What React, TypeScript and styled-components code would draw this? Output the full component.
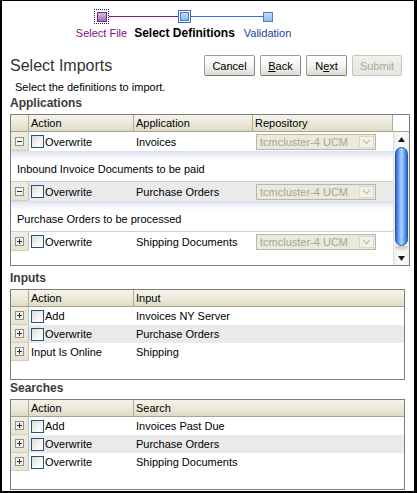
import React from "react";
import styled, { createGlobalStyle } from "styled-components";

const GlobalStyle = createGlobalStyle`
  html, body {
    margin: 0;
    padding: 0;
    background: #fff;
  }
  body {
    font-family: "Liberation Sans", Arial, sans-serif;
    font-size: 11px;
    color: #000;
  }
`;

const Frame = styled.div`
  box-sizing: border-box;
  width: 417px;
  height: 493px;
  border-style: solid;
  border-color: #000;
  border-width: 1px 3px 2px 2px;
  padding: 0 12px 0 8px;
`;

/* ---------- train ---------- */

const Train = styled.div`
  display: flex;
  margin: 8px 0 0 50px;
`;

const Step = styled.div`
  width: 83px;
  display: flex;
  flex-direction: column;
`;

const MarkerRow = styled.div`
  height: 15px;
  display: flex;
  align-items: center;
`;

const Line = styled.div<{ $color?: string }>`
  flex: 1;
  height: 1px;
  background: ${(p) => p.$color || "transparent"};
`;

const FocusRing = styled.div`
  box-sizing: border-box;
  width: 15px;
  height: 15px;
  border: 1px dotted #1a1a8c;
  display: flex;
  align-items: center;
  justify-content: center;
`;

const VisitedBox = styled.div`
  box-sizing: border-box;
  width: 10px;
  height: 10px;
  border: 1px solid #6e2f7e;
  background: linear-gradient(#d9b9e0, #a86fb6);
`;

const CurrentRing = styled.div`
  box-sizing: border-box;
  width: 13px;
  height: 13px;
  border: 1px solid #3568d0;
  padding: 1px;
  display: flex;
`;

const CurrentBox = styled.div`
  flex: 1;
  box-sizing: border-box;
  border: 1px solid #4677cc;
  background: linear-gradient(#c6dcf7, #8fb6ea);
`;

const NextBox = styled.div`
  box-sizing: border-box;
  width: 10px;
  height: 10px;
  border: 1px solid #4a7cd6;
  background: linear-gradient(#c9ddf8, #93b8ee);
`;

const StepLabel = styled.div<{ $kind: "visited" | "current" | "next" }>`
  margin-top: 3px;
  height: 13px;
  line-height: 13px;
  display: flex;
  justify-content: center;
  white-space: nowrap;
  font-size: ${(p) => (p.$kind === "current" ? "12px" : "11px")};
  font-weight: ${(p) => (p.$kind === "current" ? "bold" : "normal")};
  color: ${(p) =>
    p.$kind === "visited" ? "#7d0f82" : p.$kind === "next" ? "#1c3f9e" : "#000"};
`;

/* ---------- title / buttons ---------- */

const TitleRow = styled.div`
  margin-top: 15px;
  height: 21px;
  display: flex;
  align-items: center;
  justify-content: space-between;
`;

const Title = styled.h1`
  margin: 0;
  font-size: 16px;
  font-weight: normal;
  color: #333;
`;

const Buttons = styled.div`
  display: flex;
  gap: 5px;
`;

const Button = styled.button<{ $width: number }>`
  box-sizing: border-box;
  width: ${(p) => p.$width}px;
  height: 21px;
  padding: 0;
  font-family: "Liberation Sans", Arial, sans-serif;
  font-size: 11px;
  color: #000;
  border: 1px solid #9d9d9d;
  border-bottom-color: #767676;
  border-right-color: #858585;
  border-radius: 2px;
  background: linear-gradient(#ffffff, #f3f3ee 55%, #dcdcd3);

  &:disabled {
    color: #aaa89c;
    border-color: #c8c6bb;
    background: linear-gradient(#f1f0ec, #e6e5de);
  }

  u {
    text-decoration: underline;
  }
`;

const Instruction = styled.div`
  margin: 5px 0 0 5px;
  line-height: 13px;
  font-size: 11px;
`;

const SectionTitle = styled.div<{ $gap: number }>`
  margin-top: ${(p) => p.$gap}px;
  height: 14px;
  line-height: 14px;
  font-size: 12px;
  font-weight: bold;
  color: #3a3a3a;
`;

/* ---------- tables ---------- */

const Table = styled.div<{ $width: number }>`
  box-sizing: border-box;
  width: ${(p) => p.$width}px;
  margin-top: 4px;
  border: 1px solid #7c7c7c;
  background: #fff;
`;

const HeadRow = styled.div<{ $cols: string }>`
  display: grid;
  grid-template-columns: ${(p) => p.$cols};
  box-sizing: border-box;
  height: 17px;
  border-bottom: 1px solid #a8a38c;
  background: linear-gradient(#f5f3e9, #ebe8d9 60%, #dedac6);
`;

const HeadCell = styled.div<{ $blank?: boolean }>`
  box-sizing: border-box;
  display: flex;
  align-items: center;
  padding-left: 2px;
  border-right: 1px solid #b1ac96;
  background: ${(p) => (p.$blank ? "#fff" : "transparent")};
  white-space: nowrap;

  &:last-child {
    border-right: none;
  }
`;

const Body = styled.div<{ $height: number }>`
  height: ${(p) => p.$height}px;
  display: flex;
  overflow: hidden;
`;

const Rows = styled.div`
  flex: 1;
  display: flex;
  flex-direction: column;
`;

const Row = styled.div<{ $cols: string; $height: number; $shade?: boolean; $divider?: boolean }>`
  display: grid;
  grid-template-columns: ${(p) => p.$cols};
  box-sizing: border-box;
  height: ${(p) => p.$height}px;
  background: ${(p) => (p.$shade ? "#eaeaea" : "#fff")};
  border-top: ${(p) => (p.$divider ? "1px solid #cfcfcf" : "none")};
`;

const IconCell = styled.div`
  box-sizing: border-box;
  display: flex;
  align-items: center;
  justify-content: center;
  background: linear-gradient(#f0eee2, #e6e3d2);
  border-right: 1px solid #c6c2ad;
  border-bottom: 1px solid #d2cebc;
`;

const Cell = styled.div`
  display: flex;
  align-items: center;
  padding-left: 2px;
  white-space: nowrap;
  overflow: hidden;
`;

const DetailRow = styled.div`
  box-sizing: border-box;
  height: 30px;
  display: flex;
  align-items: flex-end;
  padding: 0 0 5px 6px;
  line-height: 13px;
  background: linear-gradient(#d6deea 0, #e9eef5 3px, #f8f9fb 7px, #fff 10px);
  white-space: nowrap;
`;

const Check = styled.span`
  box-sizing: border-box;
  width: 13px;
  height: 13px;
  margin-right: 1px;
  border: 1px solid #1f5484;
  background: linear-gradient(135deg, #dcdcd5, #f6f6f3 60%, #fff);
  flex: none;
`;

const Select = styled.div`
  box-sizing: border-box;
  width: 120px;
  height: 16px;
  margin-left: 1px;
  padding-left: 3px;
  display: flex;
  align-items: center;
  justify-content: space-between;
  border: 1px solid #b9b7a8;
  background: #ebe9da;
  color: #a6a59b;
`;

const SelectArrow = styled.div`
  box-sizing: border-box;
  width: 15px;
  height: 12px;
  margin-right: 1px;
  display: flex;
  align-items: center;
  justify-content: center;
  border: 1px solid #dcdace;
  background: #f3f2ea;
`;

/* ---------- scrollbar ---------- */

const Scrollbar = styled.div`
  box-sizing: border-box;
  width: 16px;
  display: flex;
  flex-direction: column;
  align-items: center;
  border-left: 1px solid #dedede;
  background: linear-gradient(90deg, #f1f1ec, #fbfbf9 50%, #f1f1ec);
`;

const ArrowSlot = styled.div<{ $height: number }>`
  height: ${(p) => p.$height}px;
  display: flex;
  align-items: center;
  justify-content: center;
`;

const Thumb = styled.div`
  box-sizing: border-box;
  width: 13px;
  height: 99px;
  border: 1px solid #2556b4;
  border-radius: 7px;
  background: linear-gradient(90deg, #2b61d0, #6fa3f1 25%, #acd0fb 50%, #6fa3f1 75%, #2b61d0);
`;

const ThumbShadow = styled.div`
  width: 13px;
  height: 5px;
  border-radius: 0 0 7px 7px;
  background: linear-gradient(#c9c9c4, #ecece8);
`;

const Spacer = styled.div`
  flex: 1;
`;

/* ---------- icons ---------- */

const Disclosure: React.FC<{ open?: boolean }> = ({ open }) => (
  <svg width="9" height="9" viewBox="0 0 9 9">
    <rect x="0.5" y="0.5" width="8" height="8" fill="#f5f4ee" stroke="#8f8f8f" />
    <path d="M2 4.5h5" stroke="#2e2e2e" />
    {!open && <path d="M4.5 2v5" stroke="#2e2e2e" />}
  </svg>
);

const Chevron = () => (
  <svg width="9" height="6" viewBox="0 0 9 6">
    <path d="M1 1l3.5 3.5L8 1" fill="none" stroke="#c4c3b8" strokeWidth="1.4" />
  </svg>
);

const Triangle: React.FC<{ down?: boolean }> = ({ down }) => (
  <svg width="7" height="5" viewBox="0 0 7 5">
    <path d={down ? "M0 0h7L3.5 5z" : "M0 5h7L3.5 0z"} fill="#1a1a1a" />
  </svg>
);

/* ---------- data ---------- */

const APP_COLS = "18px 105px 119px 140px";
const LIST_COLS = "18px 105px 1fr";

const applications = [
  { open: true, app: "Invoices", detail: "Inbound Invoice Documents to be paid" },
  { open: true, app: "Purchase Orders", detail: "Purchase Orders to be processed" },
  { open: false, app: "Shipping Documents" },
];

const inputs = [
  { check: true, action: "Add", name: "Invoices NY Server" },
  { check: true, action: "Overwrite", name: "Purchase Orders" },
  { check: false, action: "Input Is Online", name: "Shipping" },
];

const searches = [
  { check: true, action: "Add", name: "Invoices Past Due" },
  { check: true, action: "Overwrite", name: "Purchase Orders" },
  { check: true, action: "Overwrite", name: "Shipping Documents" },
];

type ListItem = { check: boolean; action: string; name: string };

const ListTable: React.FC<{ column: string; items: ListItem[] }> = ({ column, items }) => (
  <Table $width={395}>
    <HeadRow $cols={LIST_COLS}>
      <HeadCell />
      <HeadCell>Action</HeadCell>
      <HeadCell>{column}</HeadCell>
    </HeadRow>
    <Body $height={72}>
      <Rows>
        {items.map((it, i) => (
          <Row key={i} $cols={LIST_COLS} $height={18} $shade={i === 1}>
            <IconCell>
              <Disclosure />
            </IconCell>
            <Cell>
              {it.check && <Check />}
              {it.action}
            </Cell>
            <Cell>{it.name}</Cell>
          </Row>
        ))}
      </Rows>
    </Body>
  </Table>
);

export default function App() {
  return (
    <>
      <GlobalStyle />
      <Frame>
        <Train>
          <Step>
            <MarkerRow>
              <Line />
              <FocusRing>
                <VisitedBox />
              </FocusRing>
              <Line $color="#7d1a86" />
            </MarkerRow>
            <StepLabel $kind="visited">Select File</StepLabel>
          </Step>
          <Step>
            <MarkerRow>
              <Line $color="#7d1a86" />
              <CurrentRing>
                <CurrentBox />
              </CurrentRing>
              <Line $color="#3f6fd6" />
            </MarkerRow>
            <StepLabel $kind="current">Select Definitions</StepLabel>
          </Step>
          <Step>
            <MarkerRow>
              <Line $color="#3f6fd6" />
              <NextBox />
              <Line />
            </MarkerRow>
            <StepLabel $kind="next">Validation</StepLabel>
          </Step>
        </Train>

        <TitleRow>
          <Title>Select Imports</Title>
          <Buttons>
            <Button $width={51}>Cancel</Button>
            <Button $width={41}>
              <u>B</u>ack
            </Button>
            <Button $width={41}>
              N<u>e</u>xt
            </Button>
            <Button $width={50} disabled>
              Submit
            </Button>
          </Buttons>
        </TitleRow>

        <Instruction>Select the definitions to import.</Instruction>

        <SectionTitle $gap={2}>Applications</SectionTitle>
        <Table $width={400}>
          <HeadRow $cols={`${APP_COLS} 1fr`}>
            <HeadCell />
            <HeadCell>Action</HeadCell>
            <HeadCell>Application</HeadCell>
            <HeadCell>Repository</HeadCell>
            <HeadCell $blank />
          </HeadRow>
          <Body $height={133}>
            <Rows>
              {applications.map((a, i) => (
                <React.Fragment key={i}>
                  <Row $cols={APP_COLS} $height={i === 0 ? 19 : 20} $shade={i === 1} $divider={i > 0}>
                    <IconCell>
                      <Disclosure open={a.open} />
                    </IconCell>
                    <Cell>
                      <Check />
                      Overwrite
                    </Cell>
                    <Cell>{a.app}</Cell>
                    <Cell>
                      <Select>
                        tcmcluster-4 UCM
                        <SelectArrow>
                          <Chevron />
                        </SelectArrow>
                      </Select>
                    </Cell>
                  </Row>
                  {a.detail && <DetailRow>{a.detail}</DetailRow>}
                </React.Fragment>
              ))}
            </Rows>
            <Scrollbar>
              <ArrowSlot $height={15}>
                <Triangle />
              </ArrowSlot>
              <Thumb />
              <ThumbShadow />
              <Spacer />
              <ArrowSlot $height={13}>
                <Triangle down />
              </ArrowSlot>
            </Scrollbar>
          </Body>
        </Table>

        <SectionTitle $gap={5}>Inputs</SectionTitle>
        <ListTable column="Input" items={inputs} />

        <SectionTitle $gap={1}>Searches</SectionTitle>
        <ListTable column="Search" items={searches} />
      </Frame>
    </>
  );
}
